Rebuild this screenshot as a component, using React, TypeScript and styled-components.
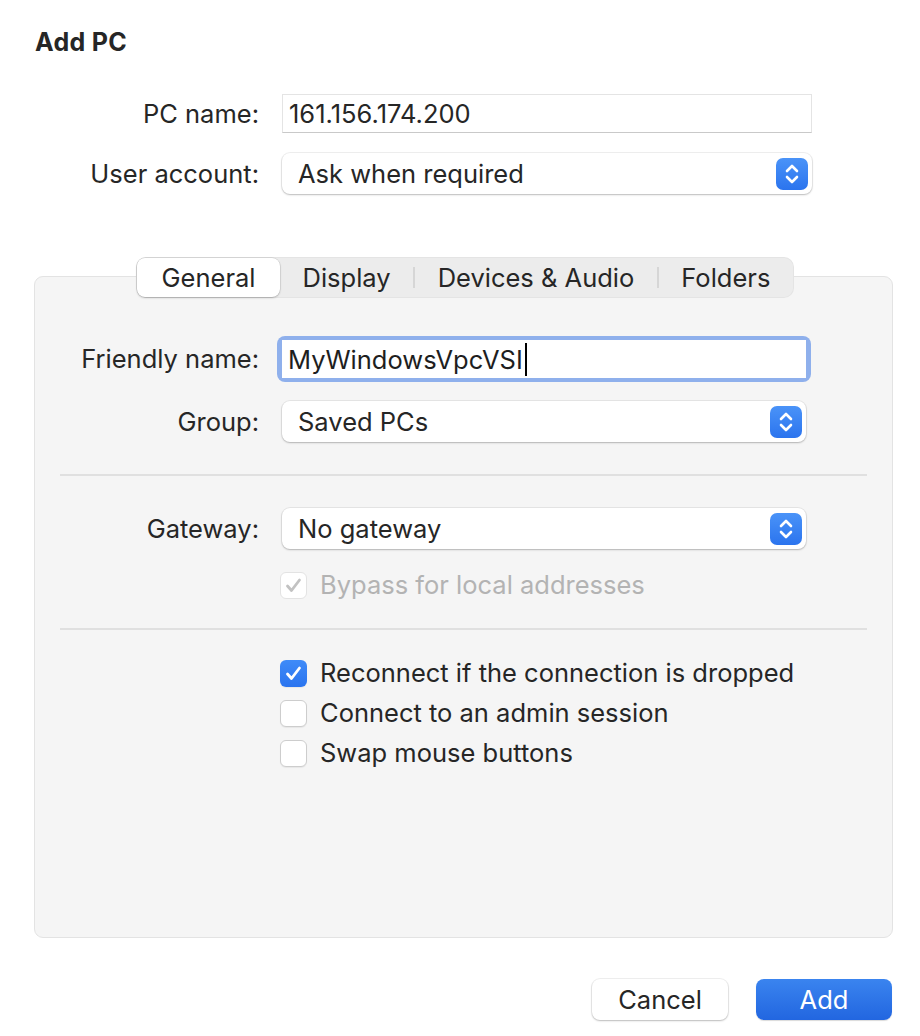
import React from 'react';
import styled, { createGlobalStyle } from 'styled-components';

const GlobalStyle = createGlobalStyle`
  html, body {
    margin: 0;
    padding: 0;
    background: #ffffff;
  }
  body {
    font-family: Inter, 'Liberation Sans', Arial, sans-serif;
    color: #262626;
  }
`;

const Window = styled.div`
  width: 920px;
  height: 1036px;
  box-sizing: border-box;
  padding: 28px 27px 0 34px;
  display: flex;
  flex-direction: column;
`;

const Title = styled.h1`
  margin: 0 0 0 1px;
  font-size: 25px;
  line-height: 29px;
  font-weight: 700;
  letter-spacing: 0.3px;
  color: #262626;
`;

const FormGrid = styled.div<{ $labelWidth: number; $controlWidth: number }>`
  display: grid;
  grid-template-columns: ${(p) => p.$labelWidth}px ${(p) => p.$controlWidth}px;
  column-gap: 23px;
  align-items: center;
`;

const TopForm = styled(FormGrid)`
  margin-top: 37px;
  row-gap: 20px;
`;

const Label = styled.label`
  text-align: right;
  font-size: 25.5px;
  line-height: 30px;
  color: #262626;
  white-space: nowrap;
`;

const TextField = styled.div`
  height: 39px;
  box-sizing: border-box;
  background: #ffffff;
  border: 1px solid #e4e4e4;
  border-bottom-color: #c9c9c9;
  padding: 0 6px;
  display: flex;
  align-items: center;
  font-size: 25.5px;
  color: #262626;
`;

const FocusRing = styled.div`
  margin: 0 -5px;
  padding: 4px 5px;
  border-radius: 8px;
  background: #8fb0ec;
`;

const FocusedField = styled.div`
  height: 38px;
  box-sizing: border-box;
  background: #ffffff;
  padding: 0 6px;
  display: flex;
  align-items: center;
  font-size: 25.5px;
  color: #1e1e1e;
`;

const Caret = styled.span`
  display: inline-block;
  width: 2px;
  height: 33px;
  margin-left: 2px;
  background: #000000;
`;

const Popup = styled.div`
  height: 41px;
  box-sizing: border-box;
  background: #ffffff;
  border-radius: 8px;
  box-shadow: 0 0 0 1px rgba(0, 0, 0, 0.06), 0 1px 2px rgba(0, 0, 0, 0.22);
  padding: 0 4px 0 16px;
  display: flex;
  align-items: center;
  justify-content: space-between;
  font-size: 25.5px;
  color: #262626;
`;

const Stepper = styled.div`
  width: 32px;
  height: 32px;
  border-radius: 7px;
  background: linear-gradient(#4a93f8, #2b74ee);
  display: flex;
  align-items: center;
  justify-content: center;
`;

const TabsArea = styled.div`
  margin-top: 63px;
  display: flex;
  flex-direction: column;
  align-items: center;
`;

const TabStrip = styled.div`
  position: relative;
  z-index: 1;
  display: flex;
  align-items: center;
  height: 41px;
  padding: 0 1px;
  margin-left: 3px;
  border-radius: 10px;
  background: #ececec;
  box-shadow: inset 0 0 0 1px rgba(0, 0, 0, 0.03);
`;

const Tab = styled.div<{ $selected?: boolean }>`
  height: 39px;
  box-sizing: border-box;
  padding: 0 ${(p) => (p.$selected ? 24.5 : 22.5)}px;
  display: flex;
  align-items: center;
  font-size: 25.5px;
  color: #262626;
  border-radius: 8px;
  background: ${(p) => (p.$selected ? '#ffffff' : 'transparent')};
  box-shadow: ${(p) => (p.$selected ? '0 0 0 0.5px rgba(0,0,0,0.12), 0 1px 2px rgba(0,0,0,0.22)' : 'none')};
`;

const TabDivider = styled.span`
  width: 2px;
  height: 21px;
  background: #d6d6d6;
`;

const Panel = styled.div`
  align-self: stretch;
  margin-top: -22px;
  height: 662px;
  box-sizing: border-box;
  background: #f5f5f5;
  border: 1px solid #e3e3e3;
  border-radius: 9px;
  padding: 59px 25px 0 25px;
  display: flex;
  flex-direction: column;
`;

const PanelGrid = styled(FormGrid)<{ $top?: number }>`
  row-gap: 19px;
  margin-top: ${(p) => p.$top ?? 0}px;
`;

const Separator = styled.hr<{ $top: number }>`
  margin: ${(p) => p.$top}px 0 0;
  border: none;
  height: 2px;
  background: #e0e0e0;
`;

const CheckList = styled.div<{ $gap: number; $top: number }>`
  display: flex;
  flex-direction: column;
  gap: ${(p) => p.$gap}px;
  margin-top: ${(p) => p.$top}px;
  padding-left: 220px;
`;

const CheckRow = styled.div<{ $disabled?: boolean }>`
  display: flex;
  align-items: center;
  gap: 13px;
  height: 28px;
  font-size: 25.5px;
  line-height: 28px;
  color: ${(p) => (p.$disabled ? '#b3b3b3' : '#262626')};
`;

const Box = styled.span<{ $checked?: boolean; $disabled?: boolean }>`
  width: 27px;
  height: 27px;
  flex-shrink: 0;
  box-sizing: border-box;
  border-radius: 6px;
  display: flex;
  align-items: center;
  justify-content: center;
  background: ${(p) => (p.$checked && !p.$disabled ? 'linear-gradient(#3f8bf8, #2a74ef)' : '#ffffff')};
  border: ${(p) => (p.$checked && !p.$disabled ? 'none' : p.$disabled ? '1px solid #e3e3e3' : '1px solid #cdcdcd')};
  box-shadow: ${(p) => (p.$disabled ? 'none' : '0 1px 1px rgba(0,0,0,0.06)')};
`;

const Footer = styled.div`
  margin-top: 41px;
  display: flex;
  justify-content: flex-end;
  gap: 28px;
  padding-right: 1px;
`;

const Button = styled.button<{ $primary?: boolean }>`
  width: 136px;
  height: 41px;
  border: none;
  border-radius: 8px;
  font-family: inherit;
  font-size: 25.5px;
  color: ${(p) => (p.$primary ? '#ffffff' : '#262626')};
  background: ${(p) => (p.$primary ? 'linear-gradient(#3a84ef, #2266e0)' : '#ffffff')};
  box-shadow: ${(p) =>
    p.$primary ? '0 1px 1px rgba(0,0,0,0.15)' : '0 0 0 1px rgba(0,0,0,0.06), 0 1px 2px rgba(0,0,0,0.22)'};
`;

const StepperIcon = () => (
  <Stepper>
    <svg width="18" height="24" viewBox="0 0 18 24" fill="none" stroke="#ffffff" strokeWidth="2.6" strokeLinecap="round" strokeLinejoin="round">
      <path d="M4 9 L9 4 L14 9" />
      <path d="M4 15 L9 20 L14 15" />
    </svg>
  </Stepper>
);

const Check = ({ color }: { color: string }) => (
  <svg width="19" height="19" viewBox="0 0 19 19" fill="none" stroke={color} strokeWidth="2.8" strokeLinecap="round" strokeLinejoin="round">
    <path d="M3.5 10 L7.5 14.5 L15.5 4" />
  </svg>
);

const Checkbox = ({ label, checked, disabled }: { label: string; checked?: boolean; disabled?: boolean }) => (
  <CheckRow $disabled={disabled}>
    <Box $checked={checked} $disabled={disabled}>
      {checked && <Check color={disabled ? '#c2c2c2' : '#ffffff'} />}
    </Box>
    {label}
  </CheckRow>
);

const tabs = ['General', 'Display', 'Devices & Audio', 'Folders'];

export default function App() {
  const selected = 0;
  return (
    <>
      <GlobalStyle />
      <Window>
        <Title>Add PC</Title>
        <TopForm $labelWidth={225} $controlWidth={530}>
          <Label>PC name:</Label>
          <TextField>161.156.174.200</TextField>
          <Label>User account:</Label>
          <Popup>
            Ask when required
            <StepperIcon />
          </Popup>
        </TopForm>

        <TabsArea>
          <TabStrip>
            {tabs.map((t, i) => (
              <React.Fragment key={t}>
                {i > 0 && i - 1 !== selected && i !== selected && <TabDivider />}
                <Tab $selected={i === selected}>{t}</Tab>
              </React.Fragment>
            ))}
          </TabStrip>
          <Panel>
            <PanelGrid $labelWidth={199} $controlWidth={524}>
              <Label>Friendly name:</Label>
              <FocusRing>
                <FocusedField>
                  MyWindowsVpcVSI
                  <Caret />
                </FocusedField>
              </FocusRing>
              <Label>Group:</Label>
              <Popup>
                Saved PCs
                <StepperIcon />
              </Popup>
            </PanelGrid>
            <Separator $top={32} />
            <PanelGrid $labelWidth={199} $controlWidth={524} $top={32}>
              <Label>Gateway:</Label>
              <Popup>
                No gateway
                <StepperIcon />
              </Popup>
            </PanelGrid>
            <CheckList $gap={0} $top={22}>
              <Checkbox label="Bypass for local addresses" checked disabled />
            </CheckList>
            <Separator $top={29} />
            <CheckList $gap={12} $top={29}>
              <Checkbox label="Reconnect if the connection is dropped" checked />
              <Checkbox label="Connect to an admin session" />
              <Checkbox label="Swap mouse buttons" />
            </CheckList>
          </Panel>
        </TabsArea>

        <Footer>
          <Button>Cancel</Button>
          <Button $primary>Add</Button>
        </Footer>
      </Window>
    </>
  );
}
